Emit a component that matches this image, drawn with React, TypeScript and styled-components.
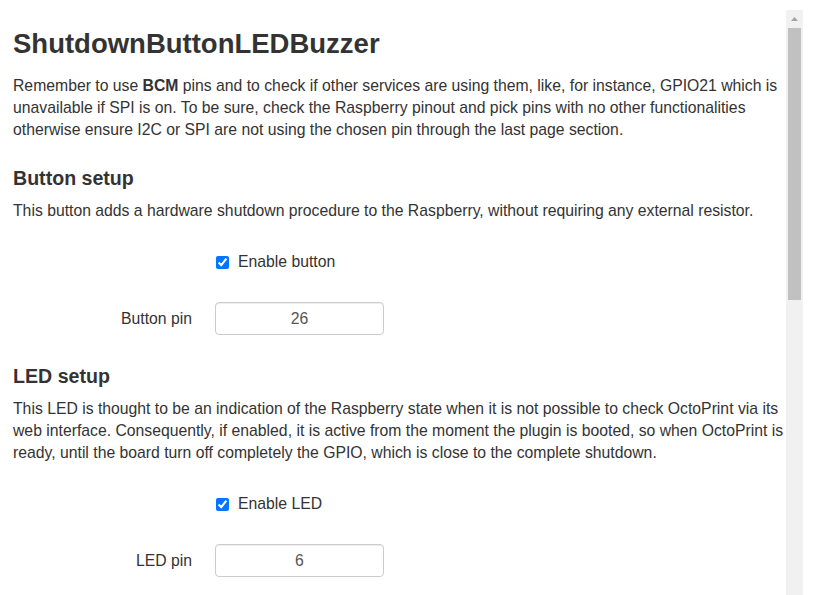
import React from "react";
import styled, { createGlobalStyle } from "styled-components";

const GlobalStyle = createGlobalStyle`
  html, body {
    margin: 0;
    padding: 0;
    overflow: hidden;
    background: #fff;
  }
  body {
    font-family: "Liberation Sans", Arial, Helvetica, sans-serif;
    font-size: 15.75px;
    line-height: 22px;
    color: #333;
  }
`;

const Page = styled.div`
  display: flex;
  height: 100vh;
  box-sizing: border-box;
  padding: 10px 10px 0 10px;
  overflow: hidden;
`;

const ScrollPane = styled.div`
  flex: 1;
  min-width: 0;
  overflow: hidden;
  padding-left: 3px;
`;

const Scrollbar = styled.div`
  width: 17px;
  flex-shrink: 0;
  display: flex;
  flex-direction: column;
  background: #f1f1f1;
`;

const ScrollButton = styled.div`
  height: 18px;
  display: flex;
  align-items: center;
  justify-content: center;
`;

const ScrollThumb = styled.div<{ $size: number }>`
  height: ${(p) => p.$size}px;
  margin: 0 2px;
  background: #c1c1c1;
`;

const Title = styled.h3`
  margin: 12px 0 9px;
  font-size: 27.5px;
  line-height: 44px;
  font-weight: bold;
  color: #333;
`;

const SectionTitle = styled.h4`
  margin: 26px 0 11px;
  font-size: 19.6px;
  line-height: 22px;
  font-weight: bold;
  color: #333;
`;

const Text = styled.p`
  margin: 0 0 11px;
`;

const Form = styled.div`
  padding-top: 18px;
`;

const Group = styled.div`
  display: flex;
  align-items: center;
  gap: 23px;
  margin-bottom: 29px;
  &:last-child {
    margin-bottom: 30px;
  }
`;

const Label = styled.label`
  width: 179px;
  text-align: right;
  flex-shrink: 0;
`;

const CheckLabel = styled.label`
  display: flex;
  align-items: center;
  height: 22px;
`;

const Check = styled.input`
  width: 13px;
  height: 13px;
  margin: 0 9px 0 1px;
`;

const NumberInput = styled.input`
  box-sizing: border-box;
  width: 169px;
  height: 33px;
  padding: 4px 6px;
  border: 1px solid #ccc;
  border-radius: 4px;
  box-shadow: inset 0 1px 1px rgba(0, 0, 0, 0.075);
  font-family: inherit;
  font-size: 15.75px;
  color: #555;
  text-align: center;
  background: #fff;
`;

function CheckGroup(props: { text: string }) {
  return (
    <Group>
      <Label />
      <CheckLabel>
        <Check type="checkbox" defaultChecked />
        {props.text}
      </CheckLabel>
    </Group>
  );
}

function PinGroup(props: { text: string; value: number }) {
  return (
    <Group>
      <Label>{props.text}</Label>
      <NumberInput type="text" defaultValue={String(props.value)} />
    </Group>
  );
}

export default function App() {
  return (
    <>
      <GlobalStyle />
      <Page>
        <ScrollPane>
          <Title>ShutdownButtonLEDBuzzer</Title>
          <Text>
            Remember to use <b>BCM</b> pins and to check if other services are using them, like, for
            instance, GPIO21 which is unavailable if SPI is on. To be sure, check the Raspberry pinout
            and pick pins with no other functionalities otherwise ensure I2C or SPI are not using the
            chosen pin through the last page section.
          </Text>

          <SectionTitle>Button setup</SectionTitle>
          <Text>
            This button adds a hardware shutdown procedure to the Raspberry, without requiring any
            external resistor.
          </Text>
          <Form>
            <CheckGroup text="Enable button" />
            <PinGroup text="Button pin" value={26} />
          </Form>

          <SectionTitle>LED setup</SectionTitle>
          <Text>
            This LED is thought to be an indication of the Raspberry state when it is not possible to
            check OctoPrint via its web interface. Consequently, if enabled, it is active from the
            moment the plugin is booted, so when OctoPrint is ready, until the board turn off
            completely the GPIO, which is close to the complete shutdown.
          </Text>
          <Form>
            <CheckGroup text="Enable LED" />
            <PinGroup text="LED pin" value={6} />
          </Form>
        </ScrollPane>
        <Scrollbar>
          <ScrollButton>
            <svg width="7" height="4" viewBox="0 0 7 4">
              <polygon points="3.5,0 7,4 0,4" fill="#a3a3a3" />
            </svg>
          </ScrollButton>
          <ScrollThumb $size={272} />
        </Scrollbar>
      </Page>
    </>
  );
}
